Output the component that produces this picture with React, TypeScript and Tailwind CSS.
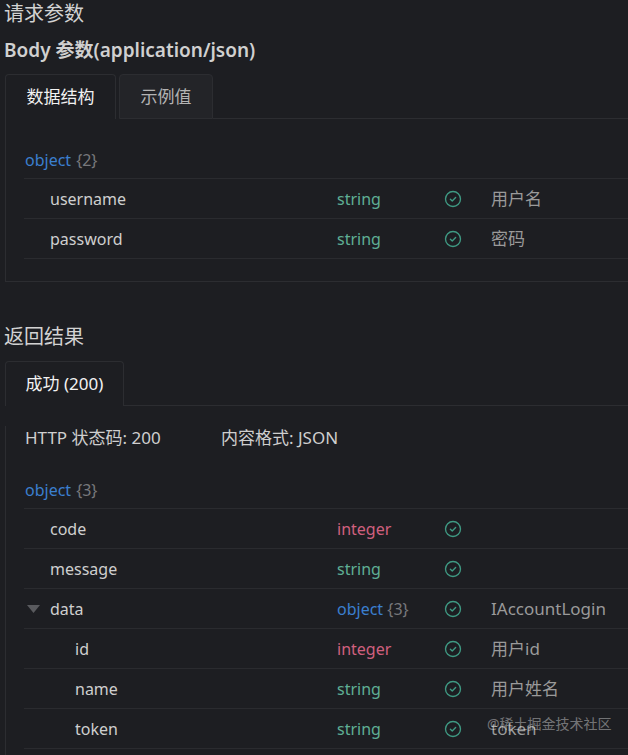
import React from "react";

const FONT = { fontFamily: '"Noto Sans", "Noto Sans CJK SC", sans-serif' };

function Check() {
  return (
    <svg width="18" height="18" viewBox="0 0 24 24" fill="none" stroke="#3f9a83" strokeWidth="1.8" strokeLinecap="round" strokeLinejoin="round">
      <circle cx="12" cy="12" r="10" />
      <path d="m8.5 12.2 2.5 2.5 4.5-4.8" />
    </svg>
  );
}

type RowProps = {
  name: string;
  type: "string" | "integer" | "object";
  count?: number;
  desc?: string;
  indent?: boolean;
  caret?: boolean;
};

function Row({ name, type, count, desc, indent, caret }: RowProps) {
  const typeColor =
    type === "string" ? "text-[#5fae94]" : type === "integer" ? "text-[#d0607e]" : "text-[#3b7fcf]";
  return (
    <div className="flex h-[40px] items-center border-b border-[#2a2b2f] text-[16px]">
      <div className="relative flex w-[313px] shrink-0 items-center">
        {caret && (
          <svg className="absolute left-[3px]" width="13" height="8" viewBox="0 0 13 8">
            <path d="M0 0 L13 0 L6.5 8 Z" fill="#595a5e" />
          </svg>
        )}
        <span className={`${indent ? "pl-[51px]" : "pl-[26px]"} text-[#cfcfcf]`}>{name}</span>
      </div>
      <div className={`w-[107px] shrink-0 ${typeColor}`}>
        {type}
        {count !== undefined && <span className="text-[#77787c]"> {"{" + count + "}"}</span>}
      </div>
      <div className="flex w-[47px] shrink-0 items-center">
        <Check />
      </div>
      <div className="text-[17px] text-[#9a9a9a]">{desc}</div>
    </div>
  );
}

function ObjectHead({ count }: { count: number }) {
  return (
    <div className="flex h-[38px] items-center border-b border-[#2a2b2f] pl-[1px] text-[16px]">
      <span className="text-[#3b7fcf]">object</span>
      <span className="ml-[5px] text-[#77787c]">{"{" + count + "}"}</span>
    </div>
  );
}

export default function App() {
  return (
    <div className="relative h-[755px] w-[628px] overflow-hidden bg-[#1d1e22]" style={FONT}>
      {/* 请求参数 */}
      <div className="flex h-[28px] items-center pl-[4px] text-[20px] text-[#d2d2d2]">请求参数</div>
      <div className="flex h-[44px] items-center pl-[4px] text-[19px] font-semibold text-[#d0d0d0]">
        Body 参数(application/json)
      </div>
      <div className="mt-[2px] flex items-end pl-[5px]">
        <div className="flex h-[45px] w-[111px] items-center justify-center rounded-t-[4px] border-x border-t border-[#2c2d31] text-[17px] text-[#f2f2f2]">
          数据结构
        </div>
        <div className="ml-[3px] flex h-[45px] w-[94px] items-center justify-center rounded-t-[4px] border border-[#2c2d31] bg-[#232428] text-[17px] text-[#b3b3b3]">
          示例值
        </div>
        <div className="flex-1 border-b border-[#2c2d31]" />
      </div>
      <div className="ml-[5px] border-b border-l border-[#2c2d31] pb-[22px] pt-[22px]">
        <div className="ml-[18px]">
          <ObjectHead count={2} />
          <Row name="username" type="string" desc="用户名" />
          <Row name="password" type="string" desc="密码" />
        </div>
      </div>

      {/* 返回结果 */}
      <div className="mt-[41px] flex h-[28px] items-center pl-[4px] text-[20px] text-[#d2d2d2]">返回结果</div>
      <div className="mt-[10px] flex items-end pl-[5px]">
        <div className="flex h-[45px] w-[119px] items-center justify-center rounded-t-[4px] border-x border-t border-[#2c2d31] text-[17px] text-[#f2f2f2]">
          成功 (200)
        </div>
        <div className="flex-1 border-b border-[#2c2d31]" />
      </div>
      <div className="ml-[5px] h-[400px] border-l border-[#2c2d31]">
        <div className="mt-[20px] flex h-[24px] items-center pl-[19px] text-[17px] text-[#cfcfcf]">
          <span className="w-[196px]">HTTP 状态码: 200</span>
          <span>内容格式: JSON</span>
        </div>
        <div className="ml-[18px] mt-[21px]">
          <ObjectHead count={3} />
          <Row name="code" type="integer" />
          <Row name="message" type="string" />
          <Row name="data" type="object" count={3} desc="IAccountLogin" caret />
          <Row name="id" type="integer" desc="用户id" indent />
          <Row name="name" type="string" desc="用户姓名" indent />
          <Row name="token" type="string" desc="token" indent />
        </div>
      </div>

      <div className="absolute left-[487px] top-[713px] text-[14px] text-[#ffffff]/40">@稀土掘金技术社区</div>
    </div>
  );
}
